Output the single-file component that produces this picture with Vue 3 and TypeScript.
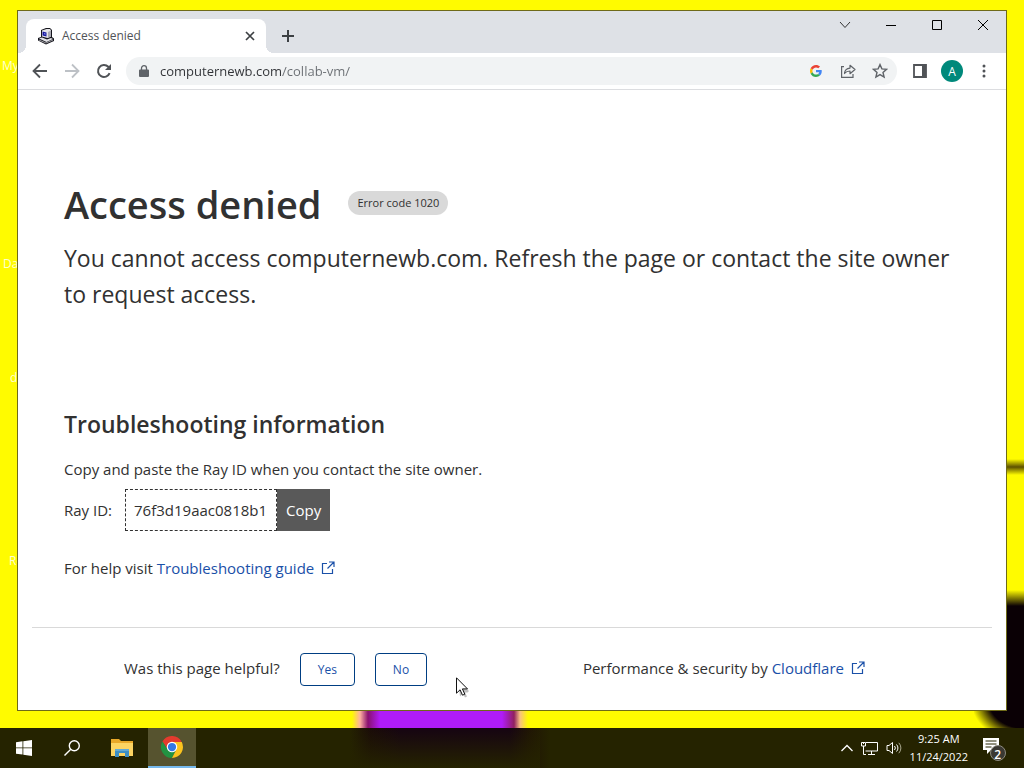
<script setup lang="ts">
import { ref } from 'vue'

interface DesktopIcon { label: string; top: number; left: number }

const address = ref('computernewb.com/collab-vm/')
const rayId = '76f3d19aac0818b1'
const icons: DesktopIcon[] = [
  { label: 'My PC', top: 58, left: 2 },
  { label: 'Data', top: 256, left: 3 },
  { label: 'docs', top: 370, left: 10 },
  { label: 'Recycle Bin', top: 553, left: 9 },
]
const helpful = ref<string | null>(null)
</script>

<template>
  <div class="desktop">
    <span v-for="icon in icons" :key="icon.label" class="desk-icon" :style="{ top: icon.top + 'px', left: icon.left + 'px' }">{{ icon.label }}</span>

    <main class="window">
      <header class="tabstrip">
        <div class="tab">
          <svg class="favicon" width="18" height="18" viewBox="0 0 18 18">
            <path d="M4 3l5-2h4l2 2v7l2 1.500V14l-8 3.500L1 13.500v-2.500l3-1z" fill="#15151c" />
            <path d="M5 3.500L9.500 2H13l1 1.500v6L10.500 11 5 9.500z" fill="#e4e4e8" />
            <path d="M11 5l3-1.500v6L11 11z" fill="#a9a9b2" />
            <path d="M5.500 4.500l4 1v4l-4-1z" fill="#1a1a9e" />
            <path d="M7 6l1.500.4v1.300L7 7.300z" fill="#7f8cf0" />
            <path d="M2 11.500l3-1 5 2 4-1.500 2 1-6.500 3z" fill="#e2e2e6" />
            <path d="M2 13l7 3 7-3" stroke="#9a9aa0" fill="none" />
          </svg>
          <span class="tab-title">Access denied</span>
          <button class="plain tab-close" aria-label="Close tab">
            <svg width="10" height="10" viewBox="0 0 10 10"><path d="M1 1l8 8M9 1l-8 8" stroke="#3c4043" stroke-width="1.700" /></svg>
          </button>
        </div>
        <button class="plain new-tab" aria-label="New tab">
          <svg width="12" height="12" viewBox="0 0 12 12"><path d="M6 0v12M0 6h12" stroke="#3c4043" stroke-width="2" /></svg>
        </button>
        <div class="controls">
          <button class="plain" aria-label="Search tabs"><svg width="12" height="12" viewBox="0 0 12 12"><path d="M1 3l5 5.500L11 3" fill="none" stroke="#333" /></svg></button>
          <button class="plain" aria-label="Minimize"><svg width="12" height="12" viewBox="0 0 12 12"><path d="M1 6.500h10" stroke="#000" /></svg></button>
          <button class="plain" aria-label="Maximize"><svg width="12" height="12" viewBox="0 0 12 12"><path d="M1.500 1.500h9v9h-9z" fill="none" stroke="#000" /></svg></button>
          <button class="plain" aria-label="Close"><svg width="12" height="12" viewBox="0 0 12 12"><path d="M1 1l10 10M11 1L1 11" stroke="#000" /></svg></button>
        </div>
      </header>

      <nav class="toolbar">
        <button class="plain nav" aria-label="Back"><svg width="16" height="16" viewBox="0 0 16 16"><path d="M15 8H2M8 1.500L1.500 8 8 14.500" fill="none" stroke="#505357" stroke-width="1.800" /></svg></button>
        <button class="plain nav" aria-label="Forward"><svg width="16" height="16" viewBox="0 0 16 16"><path d="M1 8h13M8 1.500L14.500 8 8 14.500" fill="none" stroke="#bdc1c6" stroke-width="1.800" /></svg></button>
        <button class="plain nav" aria-label="Reload"><svg width="16" height="16" viewBox="0 0 16 16"><path d="M13.600 10.200A6 6 0 1 1 12.300 3.800L14 5.500" fill="none" stroke="#505357" stroke-width="2" /><path d="M15 1v6H9z" fill="#505357" /></svg></button>
        <div class="omnibox">
          <svg width="10" height="13" viewBox="0 0 10 13"><path d="M1 4.500h8a1 1 0 0 1 1 1V11a1 1 0 0 1-1 1H1a1 1 0 0 1-1-1V5.500a1 1 0 0 1 1-1z" fill="#5f6368" /><path d="M2.500 5V3.200a2.500 2.500 0 0 1 5 0V5" fill="none" stroke="#5f6368" stroke-width="1.300" /></svg>
          <input v-model="address" class="url" aria-label="Address" spellcheck="false" />
          <button class="plain small" aria-label="Search with Google">
            <svg width="12" height="12" viewBox="0 0 48 48">
              <path fill="#ea4335" d="M24 9.500c3.540 0 6.710 1.220 9.210 3.600l6.850-6.850C35.900 2.380 30.470 0 24 0 14.620 0 6.510 5.380 2.560 13.220l7.980 6.190C12.430 13.720 17.740 9.500 24 9.500z" />
              <path fill="#4285f4" d="M46.980 24.550c0-1.570-.15-3.090-.38-4.550H24v9.020h12.940c-.58 2.960-2.260 5.480-4.780 7.180l7.730 6c4.510-4.180 7.090-10.360 7.090-17.650z" />
              <path fill="#fbbc05" d="M10.530 28.590A14.500 14.500 0 0 1 9.770 24c0-1.600.27-3.140.76-4.590l-7.980-6.190A23.900 23.900 0 0 0 0 24c0 3.870.92 7.530 2.560 10.780z" />
              <path fill="#34a853" d="M24 48c6.480 0 11.930-2.130 15.890-5.810l-7.730-6c-2.150 1.450-4.920 2.300-8.160 2.300-6.260 0-11.570-4.220-13.470-9.910l-7.980 6.190C6.510 42.620 14.620 48 24 48z" />
            </svg>
          </button>
          <button class="plain small" aria-label="Share"><svg width="16" height="16" viewBox="0 0 16 16" fill="none" stroke="#5f6368" stroke-width="1.200"><path d="M4 3.600H1.600v10.800H13V11" /><path d="M4.500 10.500C4.800 7 6.800 5.300 10 5.100V2.300L15 6.500l-5 4.200V8C7.500 8 6 8.600 4.500 10.500z" stroke-linejoin="round" /></svg></button>
          <button class="plain small" aria-label="Bookmark"><svg width="16" height="16" viewBox="0 0 16 16"><path d="M8 1.600l1.900 4.300 4.600.4-3.500 3.100 1.100 4.600L8 11.600 3.900 14 5 9.400 1.500 6.300l4.600-.4z" fill="none" stroke="#5f6368" stroke-width="1.400" /></svg></button>
        </div>
        <button class="plain tool" aria-label="Side panel"><svg width="14" height="14" viewBox="0 0 14 14"><path d="M1 1h12v12H1z" fill="none" stroke="#505357" stroke-width="1.800" /><path d="M9 1h4v12H9z" fill="#505357" /></svg></button>
        <button class="plain avatar" aria-label="Profile">A</button>
        <button class="plain tool" aria-label="Menu"><svg width="4" height="14" viewBox="0 0 4 14" fill="#505357"><circle cx="2" cy="2" r="1.500" /><circle cx="2" cy="7" r="1.500" /><circle cx="2" cy="12" r="1.500" /></svg></button>
      </nav>

      <article class="page">
        <div class="title-row">
          <h1>Access denied</h1>
          <span class="code">Error code 1020</span>
        </div>
        <p class="lead">You cannot access computernewb.com. Refresh the page or contact the site owner to request access.</p>
        <h2>Troubleshooting information</h2>
        <p class="body-text">Copy and paste the Ray ID when you contact the site owner.</p>
        <div class="ray">
          <label for="ray-id">Ray ID:</label>
          <input id="ray-id" class="ray-box" :value="rayId" readonly />
          <button class="copy">Copy</button>
        </div>
        <p class="body-text">For help visit <a href="#guide">Troubleshooting guide<svg class="ext" width="14" height="14" viewBox="0 0 14 14"><path d="M6 2.500H1.500v10h10V8M8 1h5v5M13 1L6.500 7.500" fill="none" stroke="#1a50a8" stroke-width="1.200" /></svg></a></p>
      </article>

      <footer class="footer">
        <div class="feedback">
          <span class="footer-text">Was this page helpful?</span>
          <button class="answer" :aria-pressed="helpful === 'yes'" @click="helpful = 'yes'">Yes</button>
          <button class="answer" :aria-pressed="helpful === 'no'" @click="helpful = 'no'">No</button>
        </div>
        <div class="footer-text">Performance &amp; security by <a href="#cloudflare">Cloudflare<svg class="ext" width="14" height="14" viewBox="0 0 14 14"><path d="M6 2.500H1.500v10h10V8M8 1h5v5M13 1L6.500 7.500" fill="none" stroke="#1a50a8" stroke-width="1.200" /></svg></a></div>
      </footer>
    </main>

    <footer class="taskbar">
      <button class="plain task" aria-label="Start"><svg width="16" height="16" viewBox="0 0 16 16" fill="#fff"><path d="M0 2.200l6.500-.9v6.200H0zM7.300 1.200L16 0v7.500H7.300zM0 8.300h6.500v6.300L0 13.700zM7.300 8.300H16V16l-8.700-1.200z" /></svg></button>
      <button class="plain task" aria-label="Search"><svg width="16" height="16" viewBox="0 0 16 16" fill="none" stroke="#fff" stroke-width="1.400"><circle cx="10.300" cy="5.700" r="5" /><path d="M6.800 9.200L.5 15.500" /></svg></button>
      <button class="plain task files" aria-label="File Explorer"><svg width="22" height="18" viewBox="0 0 22 18"><path d="M0 0h8l2 2h12v15H0z" fill="#e8a829" /><path d="M0 4h22v13H0z" fill="#fcd462" /><path d="M4 18v-8h14v8h-4v-4H8v4z" fill="#3d8fc4" /><path d="M4 10h14v2H4z" fill="#62a9d4" /></svg></button>
      <button class="plain task active" aria-label="Google Chrome">
        <svg width="22" height="22" viewBox="0 0 48 48"><path d="M24 24L3.200 12A24 24 0 0 1 44.800 12z" fill="#e33b2e" /><path d="M14.500 29.500L3.200 12 24 13z" fill="#e33b2e" /><path d="M14.500 29.500L3.200 12A24 24 0 0 0 24 48l9.500-18.500z" fill="#229342" /><path d="M33.500 29.500L24 48a24 24 0 0 0 21.300-35H24z" fill="#fcc31e" /><circle cx="24" cy="24" r="11.500" fill="#fff" /><circle cx="24" cy="24" r="9" fill="#3478e5" /></svg>
      </button>
      <div class="tray">
        <button class="plain" aria-label="Show hidden icons"><svg width="12" height="8" viewBox="0 0 12 8"><path d="M.5 7L6 1.500 11.500 7" fill="none" stroke="#fff" stroke-width="1.300" /></svg></button>
        <button class="plain" aria-label="Network"><svg width="17" height="15" viewBox="0 0 17 15" fill="none" stroke="#fff"><path d="M5 1.500h11.500v8.500h-12M10.500 10v3.500M7 13.500h7M2.500 5v8.500H5M.5 1.500h4v3.500h-4zM2.500 1v2" /></svg></button>
        <button class="plain" aria-label="Volume"><svg width="16" height="14" viewBox="0 0 16 14" fill="none" stroke="#fff"><path d="M1 4.500h2l3.500-3v11L3 9.500H1zM8.500 5a3 3 0 0 1 0 4M10.500 3.500a5 5 0 0 1 0 7" /><path d="M12.800 1.800a7.500 7.500 0 0 1 0 10.400" stroke="#aaa88e" /></svg></button>
      </div>
      <div class="clock"><span>9:25 AM</span><span>11/24/2022</span></div>
      <button class="plain notes" aria-label="Notifications">
        <svg width="24" height="26" viewBox="0 0 24 26"><path d="M1 3h16v12H9l-4 4v-4H1z" fill="#fff" /><path d="M3.500 6h11M3.500 9h11M3.500 12h6" stroke="#272400" /><circle cx="16" cy="18" r="7.500" fill="#3a3832" stroke="#8d8b80" /></svg>
        <span class="badge">2</span>
      </button>
    </footer>

    <svg class="cursor" width="14" height="22" viewBox="0 0 14 22"><path d="M2 3l11 11-1.500 1.500H9l2 4-2 1-2-4-3 3z" fill="#000" opacity=".25" /><path d="M.5 .8v15.400l3.600-3.400 2.400 5.400 2.300-1-2.400-5.300h5.100z" fill="#fff" stroke="#111" /></svg>
  </div>
</template>

<style>
body {
  margin: 0;
}
</style>

<style scoped>
* {
  box-sizing: border-box;
}
.desktop {
  position: relative;
  display: flex;
  flex-direction: column;
  min-height: 100vh;
  overflow: hidden;
  font-family: "Open Sans", "Noto Sans", sans-serif;
  color: #313131;
  background:
    linear-gradient(to bottom, transparent, #5c5000 8px, transparent 16px) right 0 top 459px / 18px 18px no-repeat,
    linear-gradient(to bottom, transparent, #0a0005 16px) right 0 top 590px / 18px 124px no-repeat,
    radial-gradient(ellipse at 100% 0, #0a0005 50%, transparent 75%) right 0 top 700px / 50px 40px no-repeat,
    linear-gradient(to right, transparent, #ffb0a0 8px, #8a1070 16px, #b01cf8 28px, #b01cf8 150px, #902060 162px, #f8c080 168px, transparent 176px) 352px 708px / 180px 60px no-repeat,
    #fffb00;
}
.desk-icon {
  position: absolute;
  font-size: 12px;
  line-height: 16px;
  color: #ffffd0;
  white-space: nowrap;
}
.plain {
  display: flex;
  align-items: center;
  justify-content: center;
  padding: 0;
  border: 0;
  background: none;
  color: inherit;
  font: inherit;
}
.window {
  position: relative;
  display: flex;
  flex: 1;
  flex-direction: column;
  margin: 10px 17px 17px;
  border: 1px solid #6e6a18;
  background: #fff;
}
.tabstrip {
  display: flex;
  height: 42px;
  padding: 8px 0 0 8px;
  background: #dee1e6;
}
.tab {
  position: relative;
  display: flex;
  align-items: center;
  width: 240px;
  padding: 0 11px;
  border-radius: 8px 8px 0 0;
  background: #fff;
}
.tab::before,
.tab::after {
  content: "";
  position: absolute;
  bottom: 0;
  width: 8px;
  height: 8px;
}
.tab::before {
  right: 100%;
  background: radial-gradient(circle at 0 0, #dee1e6 8px, #fff 8px);
}
.tab::after {
  left: 100%;
  background: radial-gradient(circle at 100% 0, #dee1e6 8px, #fff 8px);
}
.tab-title {
  flex: 1;
  margin-left: 7px;
  padding-bottom: 1px;
  font-size: 12px;
  line-height: 18px;
  color: #505357;
}
.new-tab {
  width: 28px;
  margin-left: 8px;
}
.controls {
  display: flex;
  height: 28px;
  margin: -8px 0 0 auto;
}
.controls button {
  width: 46px;
}
.toolbar {
  display: flex;
  align-items: center;
  height: 37px;
  padding: 0 6px;
  border-bottom: 1px solid #dcdde0;
}
.nav {
  width: 32px;
  height: 28px;
}
.omnibox {
  display: flex;
  flex: 1;
  align-items: center;
  height: 28px;
  margin: 0 7px 0 6px;
  padding: 0 1px 0 13px;
  border-radius: 14px;
  background: #f1f3f4;
}
.url {
  flex: 1;
  min-width: 0;
  margin-left: 11px;
  padding: 0;
  border: 0;
  outline: 0;
  font: 13px/20px "Open Sans", "Noto Sans", sans-serif;
  color: transparent;
  background: linear-gradient(to right, #303236 122px, #6a6e73 122px);
  -webkit-background-clip: text;
  background-clip: text;
}
.small,
.tool {
  width: 32px;
  height: 28px;
}
.avatar {
  width: 22px;
  height: 22px;
  margin: 0 5px;
  border-radius: 50%;
  background: #00897b;
  color: #fff;
  font-size: 12px;
}
.page {
  padding: 88px 46px 0;
  font-size: 15px;
  line-height: 24px;
}
.title-row {
  display: flex;
  align-items: center;
  gap: 27px;
}
h1 {
  margin: 0;
  font-size: 38px;
  font-weight: 600;
  line-height: 52px;
}
.code {
  margin-bottom: 2px;
  padding: 0 9px;
  border-radius: 12px;
  background: #d9d9d9;
  font-size: 11px;
  line-height: 24px;
}
.lead {
  margin: 10px 0 0;
  font-size: 23px;
  line-height: 36px;
}
h2 {
  margin: 94px 0 0;
  font-size: 23px;
  font-weight: 600;
  line-height: 36px;
}
.body-text {
  margin: 15px 0 0;
}
a {
  color: #1a50a8;
  text-decoration: none;
}
.ext {
  margin-left: 7px;
  vertical-align: -1px;
}
.ray {
  display: flex;
  align-items: center;
  margin: 8px 0 25px;
}
.ray-box {
  width: 152px;
  height: 42px;
  margin-left: 13px;
  padding: 0 8px;
  border: 1px dashed #313131;
  outline: 0;
  background: #fff;
  color: #313131;
  font: inherit;
}
.copy {
  height: 42px;
  padding: 0 9px;
  border: 0;
  background: #595959;
  color: #fff;
  font: inherit;
}
.footer {
  display: flex;
  align-items: center;
  justify-content: space-between;
  margin: auto 14px 0;
  padding: 25px 127px 24px 92px;
  border-top: 1px solid #d9d9d9;
  font-size: 15px;
}
.footer-text {
  padding-bottom: 3px;
}
.feedback {
  display: flex;
  align-items: center;
  gap: 20px;
}
.answer {
  height: 33px;
  padding: 0 17px;
  border: 1px solid #003e82;
  border-radius: 4px;
  background: #fff;
  color: #1a50a8;
  font: 12px/20px "Open Sans", "Noto Sans", sans-serif;
}
.taskbar {
  display: flex;
  height: 40px;
  background:
    linear-gradient(to bottom, transparent, #252300) 350px 0 / 190px 40px no-repeat,
    linear-gradient(to right, #252300 350px, #1a0c08 370px, #160412 400px, #160412 510px, #201604 530px, #252300 550px);
  color: #fff;
}
.task {
  width: 48px;
}
.files {
  width: 52px;
}
.active {
  border-bottom: 2px solid #76b9ed;
  background: #56532f;
}
.tray {
  display: flex;
  align-items: center;
  gap: 8px;
  margin-left: auto;
}
.clock {
  display: flex;
  flex-direction: column;
  align-items: center;
  margin: 2px 14px 0 8px;
  font-size: 11px;
  line-height: 18px;
}
.notes {
  position: relative;
  width: 24px;
  margin-right: 18px;
}
.badge {
  position: absolute;
  right: 5px;
  bottom: 4px;
  font-size: 12px;
  font-weight: 600;
  line-height: 18px;
}
.cursor {
  position: absolute;
  left: 456px;
  top: 677px;
}
</style>
